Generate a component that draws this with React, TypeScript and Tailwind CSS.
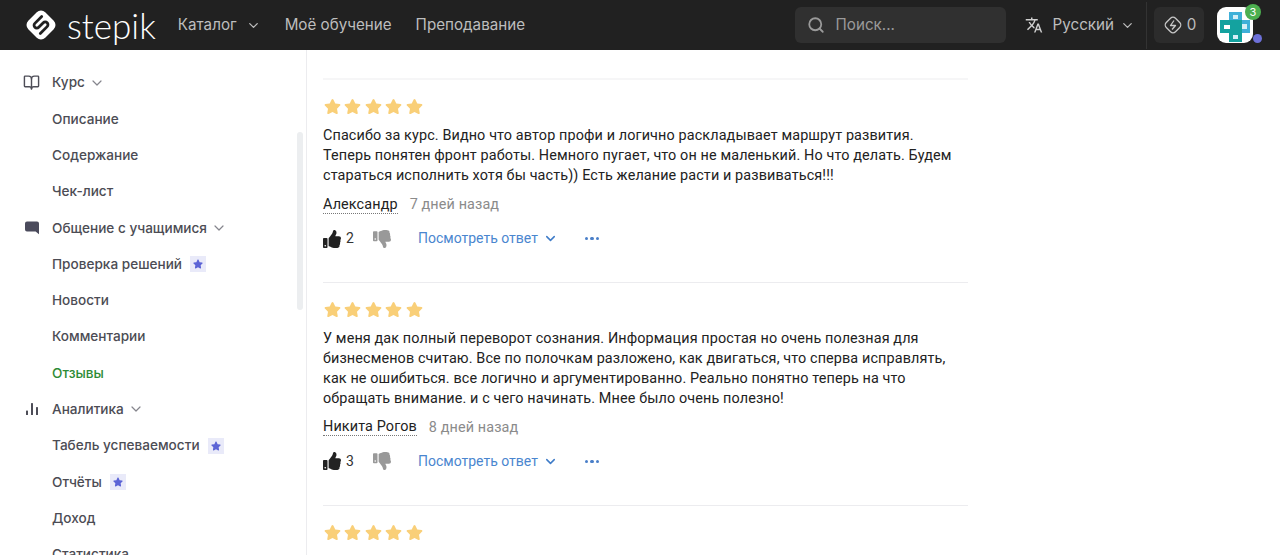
import { BookOpen, ChevronDown, Search } from 'lucide-react';
import { FaStar, FaThumbsDown, FaThumbsUp } from 'react-icons/fa';
import { MdTranslate } from 'react-icons/md';

interface NavItem {
  label: string;
  icon?: 'book' | 'chat' | 'chart';
  group?: boolean;
  premium?: boolean;
  active?: boolean;
}

const NAV_ITEMS: NavItem[] = [
  { label: 'Курс', icon: 'book', group: true },
  { label: 'Описание' },
  { label: 'Содержание' },
  { label: 'Чек-лист' },
  { label: 'Общение с учащимися', icon: 'chat', group: true },
  { label: 'Проверка решений', premium: true },
  { label: 'Новости' },
  { label: 'Комментарии' },
  { label: 'Отзывы', active: true },
  { label: 'Аналитика', icon: 'chart', group: true },
  { label: 'Табель успеваемости', premium: true },
  { label: 'Отчёты', premium: true },
  { label: 'Доход' },
  { label: 'Статистика' },
];

const REVIEWS = [
  {
    lines: [
      'Спасибо за курс. Видно что автор профи и логично раскладывает маршрут развития.',
      'Теперь понятен фронт работы. Немного пугает, что он не маленький. Но что делать. Будем',
      'стараться исполнить хотя бы часть)) Есть желание расти и развиваться!!!',
    ],
    author: 'Александр',
    date: '7 дней назад',
    likes: 2,
  },
  {
    lines: [
      'У меня дак полный переворот сознания. Информация простая но очень полезная для',
      'бизнесменов считаю. Все по полочкам разложено, как двигаться, что сперва исправлять,',
      'как не ошибиться. все логично и аргументированно. Реально понятно теперь на что',
      'обращать внимание. и с чего начинать. Мнее было очень полезно!',
    ],
    author: 'Никита Рогов',
    date: '8 дней назад',
    likes: 3,
  },
];

function Logo() {
  return (
    <svg width="34" height="34" viewBox="0 0 34 34" fill="none">
      <rect x="5" y="5" width="24" height="24" rx="6" fill="#fff" transform="rotate(45 17 17)" />
      <g transform="translate(17 17) rotate(-45)">
        <path
          d="M6.5 -5.5H-3.2a2.75 2.75 0 0 0 0 5.5H3.2a2.75 2.75 0 0 1 0 5.5H-6.5"
          stroke="#212121"
          strokeWidth="2.8"
          strokeLinecap="round"
        />
      </g>
    </svg>
  );
}

function NavIcon({ type }: { type: NavItem['icon'] }) {
  if (type === 'book') return <BookOpen size={17} strokeWidth={2} className="text-[#4d4d57]" />;
  if (type === 'chat') {
    return (
      <svg width="16" height="16" viewBox="0 0 16 16" fill="#4b4b5c">
        <path d="M3 1.5h10a2 2 0 0 1 2 2v10.8l-3.4-2.8H3a2 2 0 0 1-2-2v-6a2 2 0 0 1 2-2z" />
      </svg>
    );
  }
  return (
    <svg width="16" height="16" viewBox="0 0 16 16" fill="#4d4d57">
      <rect x="2" y="9.5" width="2" height="4.5" rx="0.6" />
      <rect x="7" y="2" width="2" height="12" rx="0.6" />
      <rect x="12" y="6" width="2" height="8" rx="0.6" />
    </svg>
  );
}

function Sidebar() {
  return (
    <aside className="relative h-[505px] w-[307px] shrink-0 overflow-hidden border-r border-[#ececef] pt-[14.4px]">
      {NAV_ITEMS.map((item) => (
        <div
          key={item.label}
          className={`flex h-[36.3px] items-center text-[13.6px] font-medium ${item.active ? 'text-[#2e8b36]' : 'text-[#4c4c54]'}`}
        >
          <span className="flex w-[52px] shrink-0 justify-end pr-[12px]">
            {item.icon && <NavIcon type={item.icon} />}
          </span>
          <span>{item.label}</span>
          {item.group && <ChevronDown size={16} strokeWidth={1.8} className="ml-[4px] text-[#85858d]" />}
          {item.premium && (
            <span className="ml-[8px] flex h-[16px] w-[16px] items-center justify-center bg-[#e9eaf9]">
              <FaStar size={10} className="text-[#5c64d6]" />
            </span>
          )}
        </div>
      ))}
      <div className="absolute left-[297px] top-[82px] h-[178px] w-[6px] rounded-full bg-[#eceef0]" />
    </aside>
  );
}

function Stars() {
  return (
    <div className="flex h-[20px] items-center gap-[3.4px] pl-[1px]">
      {[0, 1, 2, 3, 4].map((i) => (
        <FaStar key={i} size={17} className="text-[#f9cf78]" />
      ))}
    </div>
  );
}

function Review({ lines, author, date, likes }: (typeof REVIEWS)[number]) {
  return (
    <article className="border-t-2 border-[#f6f6f7] pb-[33px] pt-[16px] [&+article]:border-t [&+article]:border-[#ececef] [&+article]:pb-[34px] [&+article]:pt-[17px] [&+article>div:nth-child(2)]:mt-[9px]">
      <Stars />
      <div className="mt-[10px] text-[14.4px] leading-[20.2px] tracking-[0.12px] text-[#222222]">
        {lines.map((line) => (
          <div key={line} className="whitespace-nowrap">
            {line}
          </div>
        ))}
      </div>
      <div className="mt-[8px] flex h-[20px] items-center text-[14.4px] tracking-[0.12px]">
        <span className="border-b border-dotted border-[#777] leading-[17px] text-[#222222]">{author}</span>
        <span className="ml-[12px] text-[#8b8b8b]">{date}</span>
      </div>
      <div className="mt-[14px] flex h-[20px] items-center text-[14px]">
        <FaThumbsUp size={18} className="text-[#222222]" />
        <span className="ml-[5px] w-[19px] text-[#333333]">{likes}</span>
        <FaThumbsDown size={18} className="ml-[8px] text-[#999999]" />
        <span className="ml-[27px] text-[#4a86cf]">Посмотреть ответ</span>
        <ChevronDown size={15} strokeWidth={2.4} className="ml-[5px] text-[#3f7cc8]" />
        <span className="ml-[27px] flex gap-[2px]">
          <i className="h-[3.5px] w-[3.5px] rounded-full bg-[#4a7fc9]" />
          <i className="h-[3.5px] w-[3.5px] rounded-full bg-[#4a7fc9]" />
          <i className="h-[3.5px] w-[3.5px] rounded-full bg-[#4a7fc9]" />
        </span>
      </div>
    </article>
  );
}

function Avatar() {
  return (
    <div className="relative ml-[13px] h-[36px] w-[36px] rounded-[9px] bg-white">
      <svg width="36" height="36" viewBox="0 0 36 36" className="absolute inset-0">
        <rect x="12" y="5" width="13" height="12" fill="#3fb0d8" />
        <rect x="21" y="13" width="12" height="13" fill="#3fb0d8" />
        <rect x="3" y="13" width="13" height="13" fill="#14a29f" />
        <rect x="12" y="25" width="13" height="10" fill="#14a29f" />
        <rect x="12" y="13" width="13" height="13" fill="#14a29f" />
        <rect x="7" y="18" width="6" height="4" fill="#fff" />
        <rect x="16" y="8" width="5" height="4" fill="#d5eef6" />
        <rect x="25" y="17" width="5" height="5" fill="#d5eef6" />
        <rect x="16" y="28" width="5" height="4" fill="#d5eef6" />
      </svg>
      <span className="absolute -right-[8px] -top-[3px] flex h-[16px] w-[16px] items-center justify-center rounded-full bg-[#4caf50] text-[11px] text-white">
        3
      </span>
      <span className="absolute -right-[8.5px] bottom-0 h-[9px] w-[9px] rounded-full bg-[#6d70d8]" />
    </div>
  );
}

function Header() {
  return (
    <header className="flex h-[50px] items-center bg-[#212121] font-['Inter',sans-serif] text-[15.2px] text-[#bdbdbd]">
      <div className="ml-[24px] flex items-center">
        <Logo />
        <span className="ml-[9px] font-['Lato',sans-serif] text-[35px] font-light leading-none text-white">
          stepik
        </span>
      </div>
      <span className="ml-[22px]">Каталог</span>
      <ChevronDown size={15} strokeWidth={2} className="ml-[9px]" />
      <span className="ml-[24px]">Моё обучение</span>
      <span className="ml-[24px]">Преподавание</span>
      <div className="ml-auto flex items-center pr-[27px]">
        <div className="flex h-[36px] w-[211px] items-center rounded-[6px] bg-[#303030] pl-[12px] text-[#9a9a9a]">
          <Search size={18} strokeWidth={2.4} />
          <span className="ml-[11px]">Поиск...</span>
        </div>
        <MdTranslate size={18} className="ml-[19px] text-[#cfcfcf]" />
        <span className="ml-[10px]">Русский</span>
        <ChevronDown size={15} strokeWidth={2} className="ml-[6px]" />
        <div className="ml-[11px] h-[47px] w-px self-start bg-[#333333]" />
        <div className="ml-[7px] flex h-[36px] w-[50px] items-center justify-center gap-[3px] rounded-[6px] bg-[#2c2c2c]">
          <svg width="22" height="22" viewBox="0 0 22 22" fill="none" stroke="#c8c8c8" strokeWidth="1.3">
            <rect x="4.5" y="4.5" width="13" height="13" rx="3.5" transform="rotate(45 11 11)" />
            <path d="M12 6.5l-3.5 5h5L10 15.5" strokeLinejoin="round" />
          </svg>
          <span>0</span>
        </div>
        <Avatar />
      </div>
    </header>
  );
}

export default function App() {
  return (
    <div className="h-[555px] overflow-hidden bg-white font-['Inter',sans-serif]">
      <Header />
      <div className="flex">
        <Sidebar />
        <main className="ml-[16px] w-[645px] pt-[28px] font-['Roboto',sans-serif]">
          {REVIEWS.map((review) => (
            <Review key={review.author} {...review} />
          ))}
          <div className="border-t border-[#ececef] pt-[16px]">
            <Stars />
          </div>
        </main>
      </div>
    </div>
  );
}
